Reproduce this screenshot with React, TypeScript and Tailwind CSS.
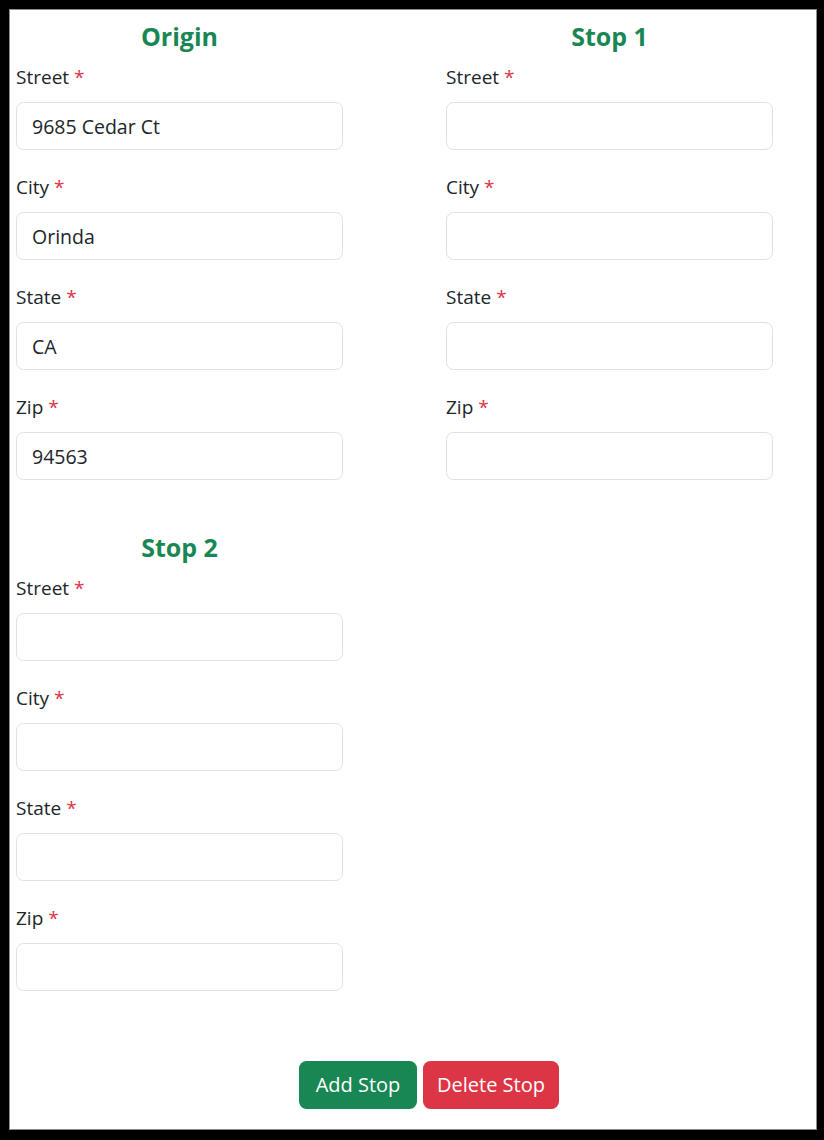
import { useState } from "react";

type Address = { street: string; city: string; state: string; zip: string };

const fields: { key: keyof Address; label: string }[] = [
  { key: "street", label: "Street" },
  { key: "city", label: "City" },
  { key: "state", label: "State" },
  { key: "zip", label: "Zip" },
];

const empty: Address = { street: "", city: "", state: "", zip: "" };

const AddressBlock = ({
  title,
  value,
  onChange,
}: {
  title: string;
  value: Address;
  onChange: (a: Address) => void;
}) => (
  <div className="w-[327px]">
    <h5 className="text-center text-[25px] leading-[30px] font-bold text-[#198754] mb-[11px]">{title}</h5>
    {fields.map(f => (
      <div key={f.key} className="mb-[22px]">
        <label className="block text-[19px] leading-[30px] text-[#212529] mb-[10px]">
          {f.label} <span className="text-[#dc3545]">*</span>
        </label>
        <input
          type="text"
          value={value[f.key]}
          onChange={e => onChange({ ...value, [f.key]: e.target.value })}
          className="block w-full h-[48px] px-[15px] text-[19.5px] text-[#212529] bg-white border border-[#dee2e6] rounded-[7.5px] outline-none"
        />
      </div>
    ))}
  </div>
);

export default function App() {
  const [stops, setStops] = useState<Address[]>([
    { street: "9685 Cedar Ct", city: "Orinda", state: "CA", zip: "94563" },
    { ...empty },
    { ...empty },
  ]);

  const update = (i: number, a: Address) => setStops(s => s.map((x, j) => (j === i ? a : x)));

  return (
    <div className="w-[824px] h-[1140px] bg-black pt-[9px] pl-[9px] pr-[7px] pb-[10px] font-['Open_Sans',sans-serif]">
      <div className="h-full bg-white border border-[#8c8c8c] overflow-hidden pt-[11px] pl-[6px]">
        <div className="grid grid-cols-[430px_430px] gap-y-[30px]">
          {stops.map((s, i) => (
            <AddressBlock key={i} title={i === 0 ? "Origin" : `Stop ${i}`} value={s} onChange={a => update(i, a)} />
          ))}
        </div>
        <div className="w-[826px] flex justify-center gap-[6px] mt-[48px]">
          <button
            onClick={() => setStops(s => [...s, { ...empty }])}
            className="w-[118px] h-[48px] text-[20px] text-white bg-[#198754] rounded-[7.5px]"
          >
            Add Stop
          </button>
          <button
            onClick={() => setStops(s => (s.length > 1 ? s.slice(0, -1) : s))}
            className="w-[136px] h-[48px] text-[20px] text-white bg-[#dc3545] rounded-[7.5px]"
          >
            Delete Stop
          </button>
        </div>
      </div>
    </div>
  );
}
